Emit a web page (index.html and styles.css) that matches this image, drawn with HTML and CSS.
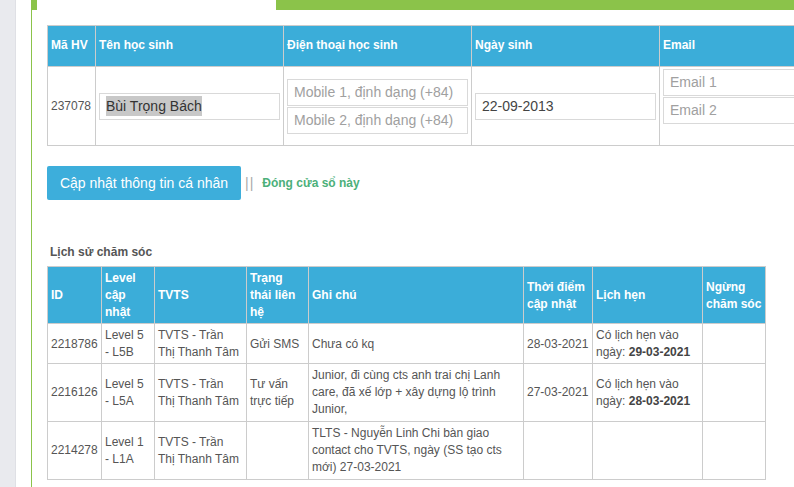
FILE: index.html
```html
<!DOCTYPE html>
<html lang="vi">
<head>
<meta charset="utf-8">
<title>Thông tin học sinh</title>
<link rel="stylesheet" href="styles.css">
</head>
<body>
<div class="page">
  <aside class="sidebar"></aside>
  <div class="gutter"></div>
  <main class="main">
    <div class="topbar">
      <div class="tab-edge"></div>
      <div class="tab-active"></div>
      <div class="tab-rest"></div>
    </div>
    <div class="content">
      <table class="info-table">
        <colgroup>
          <col class="c-ma"><col class="c-wide"><col class="c-wide"><col class="c-wide"><col class="c-wide">
        </colgroup>
        <thead>
          <tr>
            <th>Mã HV</th>
            <th>Tên học sinh</th>
            <th>Điện thoại học sinh</th>
            <th>Ngày sinh</th>
            <th>Email</th>
          </tr>
        </thead>
        <tbody>
          <tr>
            <td class="code">237078</td>
            <td><div class="field"><span class="sel">Bùi Trọng Bách</span></div></td>
            <td>
              <div class="field ph stack">Mobile 1, định dạng (+84)</div>
              <div class="field ph">Mobile 2, định dạng (+84)</div>
            </td>
            <td><div class="field">22-09-2013</div></td>
            <td class="email-cell">
              <div class="field ph stack first">Email 1</div>
              <div class="field ph">Email 2</div>
            </td>
          </tr>
        </tbody>
      </table>

      <div class="actions">
        <button class="btn-primary" type="button">Cập nhật thông tin cá nhân</button>
        <span class="sep">||</span>
        <a class="close-link" href="#">Đóng cửa sổ này</a>
      </div>

      <h3 class="section-title">Lịch sử chăm sóc</h3>

      <table class="history">
        <colgroup>
          <col class="h-id"><col class="h-level"><col class="h-tvts"><col class="h-status"><col class="h-note"><col class="h-time"><col class="h-appt"><col class="h-stop">
        </colgroup>
        <thead>
          <tr>
            <th>ID</th>
            <th>Level cập nhật</th>
            <th>TVTS</th>
            <th>Trạng thái liên hệ</th>
            <th>Ghi chú</th>
            <th>Thời điểm cập nhật</th>
            <th>Lịch hẹn</th>
            <th>Ngừng chăm sóc</th>
          </tr>
        </thead>
        <tbody>
          <tr>
            <td>2218786</td>
            <td>Level 5 - L5B</td>
            <td>TVTS - Trần Thị Thanh Tâm</td>
            <td>Gửi SMS</td>
            <td>Chưa có kq</td>
            <td>28-03-2021</td>
            <td>Có lịch hẹn vào ngày: <b>29-03-2021</b></td>
            <td></td>
          </tr>
          <tr class="tall">
            <td>2216126</td>
            <td>Level 5 - L5A</td>
            <td>TVTS - Trần Thị Thanh Tâm</td>
            <td>Tư vấn trực tiếp</td>
            <td>Junior, đi cùng cts anh trai chị Lanh care, đã xế lớp + xây dựng lộ trình Junior,</td>
            <td>27-03-2021</td>
            <td>Có lịch hẹn vào ngày: <b>28-03-2021</b></td>
            <td></td>
          </tr>
          <tr class="tall">
            <td>2214278</td>
            <td>Level 1 - L1A</td>
            <td>TVTS - Trần Thị Thanh Tâm</td>
            <td></td>
            <td>TLTS - Nguyễn Linh Chi bàn giao contact cho TVTS, ngày (SS tạo cts mới) 27-03-2021</td>
            <td></td>
            <td></td>
            <td></td>
          </tr>
        </tbody>
      </table>
    </div>
  </main>
</div>
</body>
</html>
```

FILE: styles.css
```css
html, body {
  margin: 0;
  padding: 0;
  overflow: hidden;
  background: #ffffff;
}

body {
  font-family: "Liberation Sans", Arial, sans-serif;
  font-size: 12px;
  color: #555555;
}

.page {
  display: flex;
  min-height: 487px;
  width: 900px;
}

.sidebar {
  width: 15px;
  flex: 0 0 15px;
  background: #e9eaee;
  border-right: 1px solid #dfe0e5;
}

.gutter {
  width: 15px;
  flex: 0 0 15px;
}

.main {
  flex: 1 1 auto;
  border-left: 1px solid #8bc34a;
  min-width: 0;
}

.topbar {
  display: flex;
  height: 10px;
}

.tab-edge {
  width: 5px;
  background: #8bc34a;
}

.tab-active {
  width: 239px;
  background: #ffffff;
}

.tab-rest {
  flex: 1 1 auto;
  background: #8bc34a;
}

.content {
  padding: 15px 0 0 15px;
}

/* ---------- top info table ---------- */
.info-table {
  border-collapse: collapse;
  table-layout: fixed;
  width: 800px;
}

.c-ma { width: 48px; }
.c-wide { width: 188px; }

.info-table th,
.info-table td {
  border: 1px solid #cccccc;
}

.info-table th {
  background: #3badd9;
  color: #ffffff;
  font-weight: bold;
  text-align: left;
  line-height: 17px;
  padding: 11px 3px 12px;
  height: 17px;
}

.info-table td {
  height: 78px;
  padding: 0 3px;
  vertical-align: middle;
}

.info-table td.email-cell {
  vertical-align: top;
}

.field.first {
  margin-top: 2px;
}

.code {
  color: #555555;
}

.field {
  box-sizing: border-box;
  height: 27px;
  border: 1px solid #d9d9d9;
  padding: 0 6px;
  font-size: 14px;
  line-height: 25px;
  color: #444444;
  white-space: nowrap;
  overflow: hidden;
}

.field.stack {
  margin-bottom: 1px;
}

.field.ph {
  color: #a0a0a0;
}

.sel {
  background: #c8c8c8;
  color: #333333;
  padding: 2px 0;
}

/* ---------- actions ---------- */
.actions {
  display: flex;
  align-items: center;
  margin-top: 20px;
  height: 34px;
}

.btn-primary {
  height: 34px;
  width: 194px;
  border: 0;
  border-radius: 2px;
  background: #3daedb;
  color: #ffffff;
  font-family: "Liberation Sans", Arial, sans-serif;
  font-size: 14px;
  padding: 0;
  text-align: center;
}

.sep {
  color: #a8a8a8;
  font-size: 14px;
  font-weight: normal;
  margin-left: 4px;
  letter-spacing: 1px;
}

.close-link {
  color: #4cb07a;
  font-weight: bold;
  font-size: 12px;
  text-decoration: none;
  margin-left: 8px;
  margin-top: -1px;
}

.section-title {
  margin: 44px 0 5px 3px;
  font-size: 12px;
  line-height: 17px;
  font-weight: bold;
  color: #555555;
}

/* ---------- history table ---------- */
.history {
  border-collapse: collapse;
  table-layout: fixed;
  width: 719px;
}

.h-id { width: 54px; }
.h-level { width: 53px; }
.h-tvts { width: 92px; }
.h-status { width: 62px; }
.h-note { width: 215px; }
.h-time { width: 69px; }
.h-appt { width: 110px; }
.h-stop { width: 63px; }

.history th,
.history td {
  border: 1px solid #cccccc;
  padding: 3px 3px 2px;
  line-height: 17px;
  text-align: left;
  vertical-align: middle;
}

.history tr.tall td {
  padding-bottom: 3px;
}

.history th {
  background: #3badd9;
  color: #ffffff;
  font-weight: bold;
}

.history td {
  color: #555555;
}

.history td b {
  color: #444444;
}
```
